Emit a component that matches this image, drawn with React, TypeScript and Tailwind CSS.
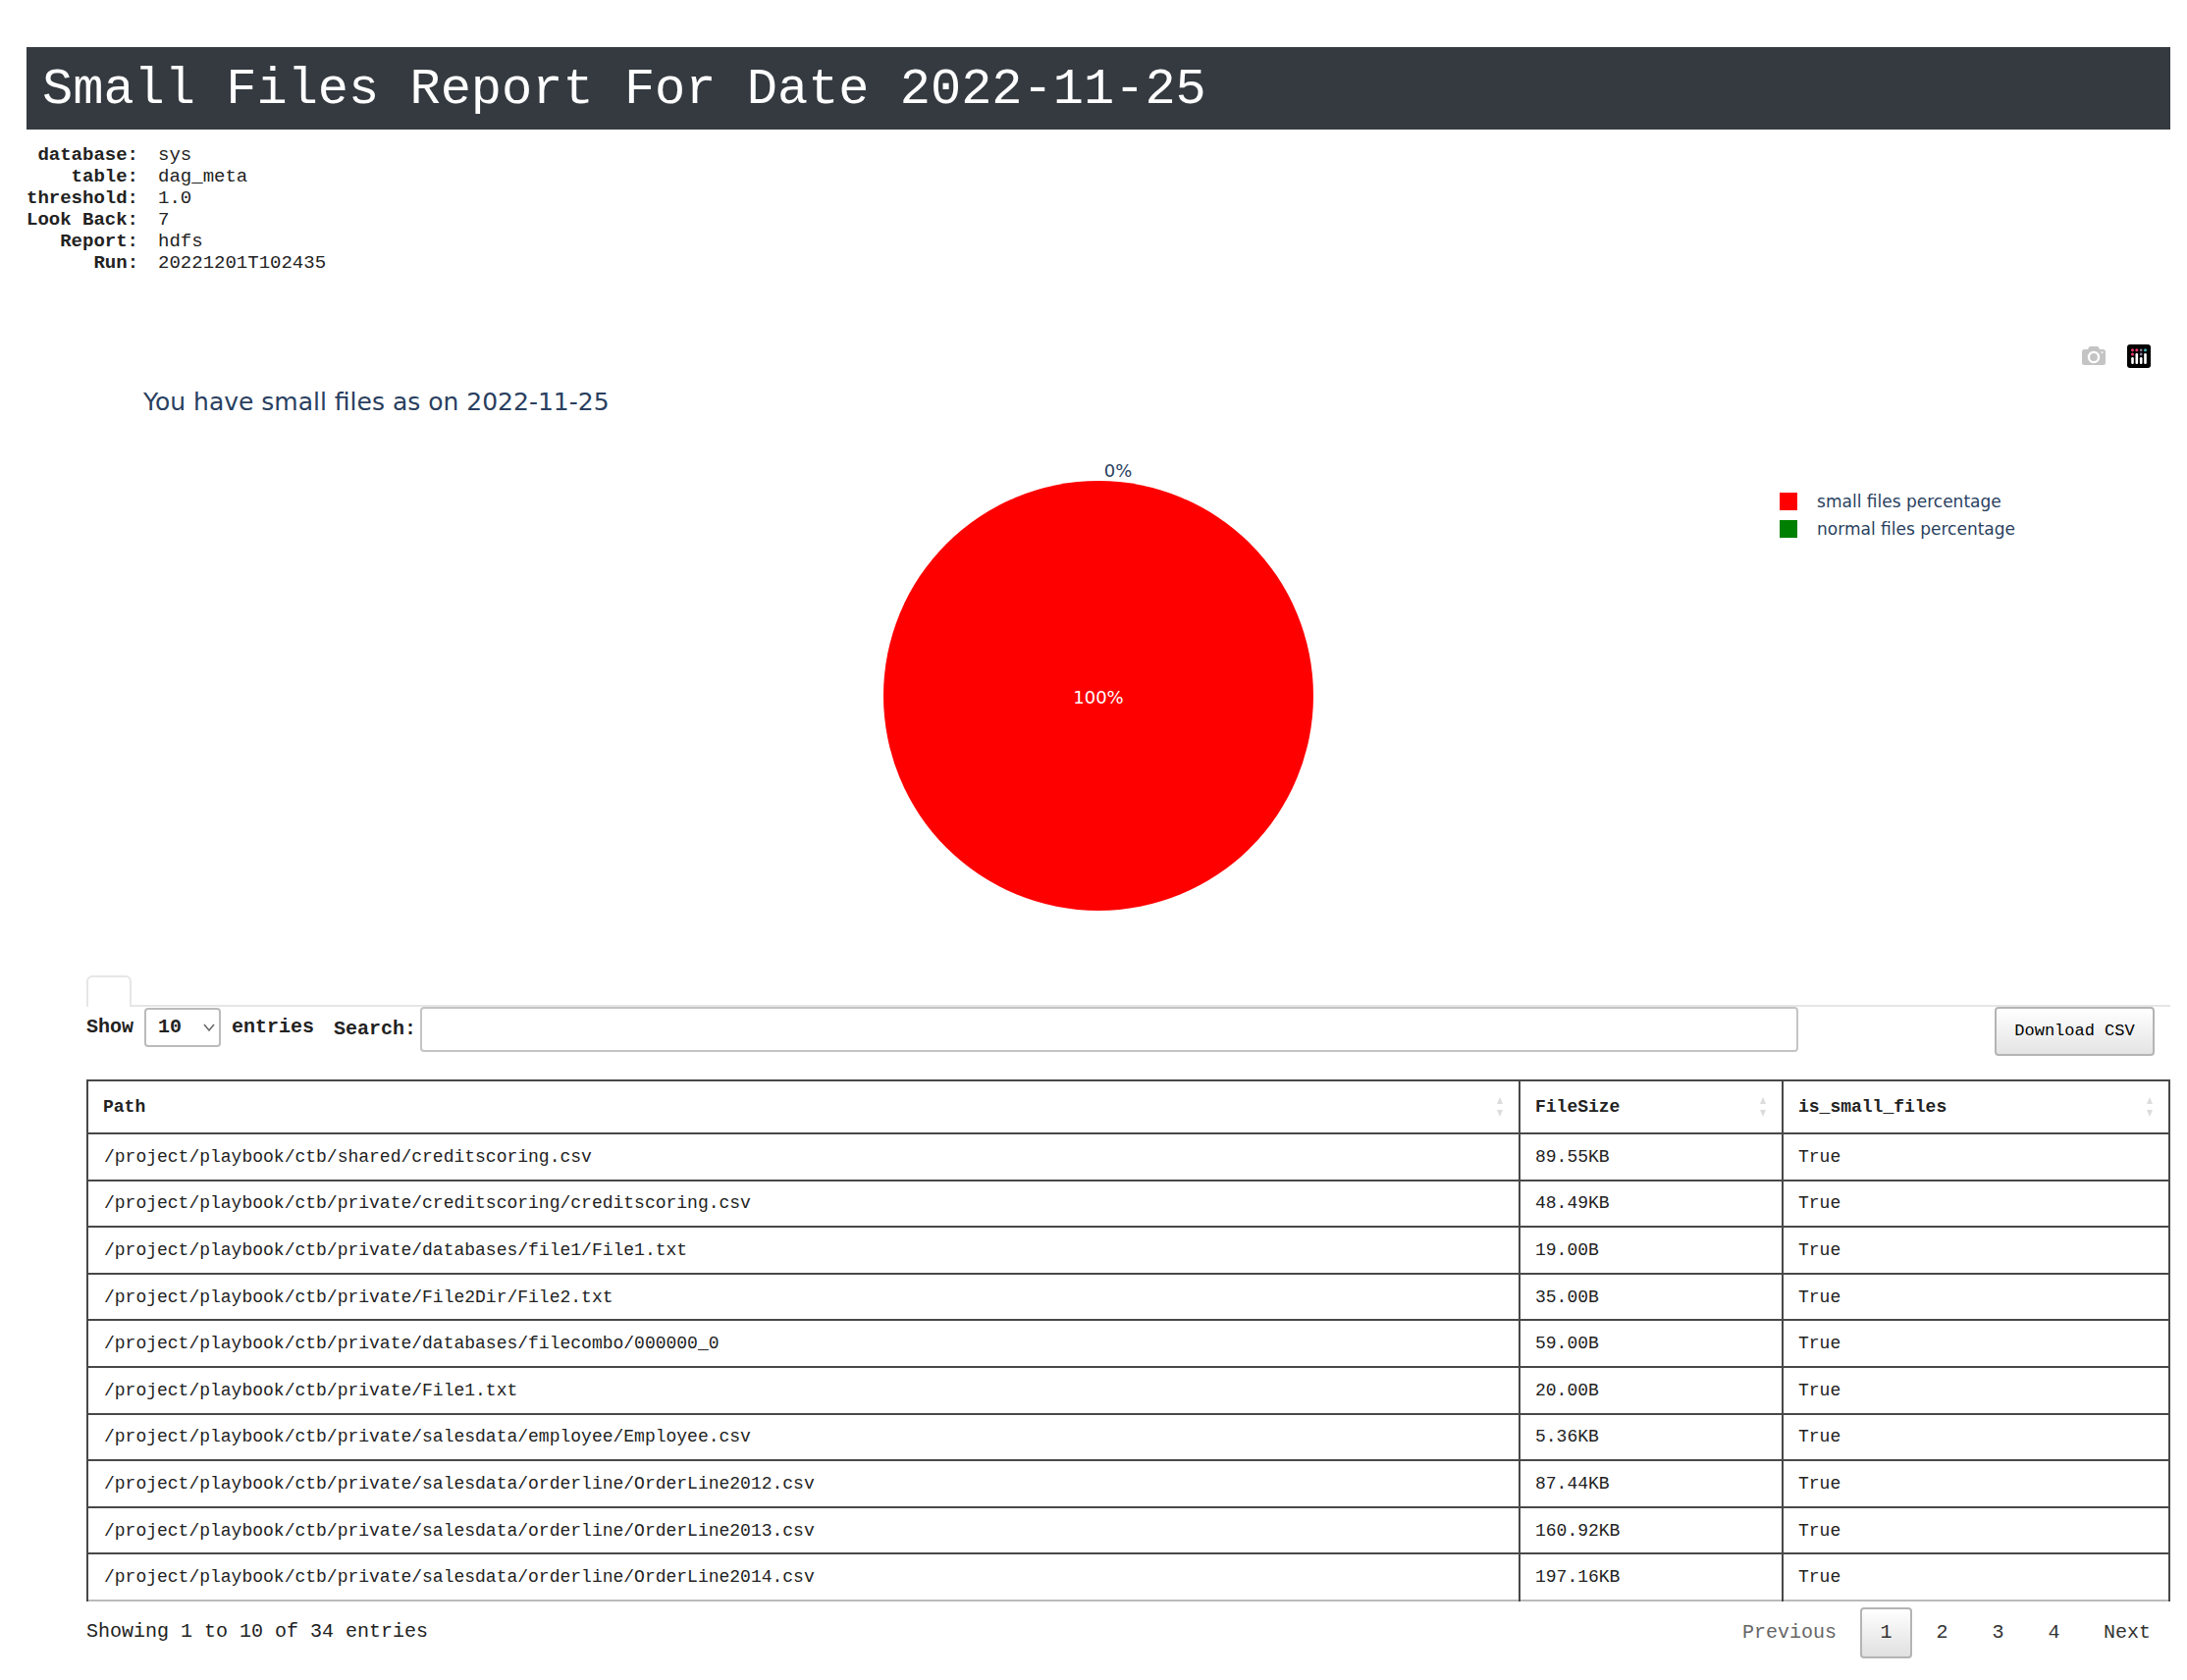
import { useState } from 'react';

const meta = [
  { label: 'database:', value: 'sys' },
  { label: 'table:', value: 'dag_meta' },
  { label: 'threshold:', value: '1.0' },
  { label: 'Look Back:', value: '7' },
  { label: 'Report:', value: 'hdfs' },
  { label: 'Run:', value: '20221201T102435' },
];

const files = [
  { path: '/project/playbook/ctb/shared/creditscoring.csv', size: '89.55KB', small: 'True' },
  { path: '/project/playbook/ctb/private/creditscoring/creditscoring.csv', size: '48.49KB', small: 'True' },
  { path: '/project/playbook/ctb/private/databases/file1/File1.txt', size: '19.00B', small: 'True' },
  { path: '/project/playbook/ctb/private/File2Dir/File2.txt', size: '35.00B', small: 'True' },
  { path: '/project/playbook/ctb/private/databases/filecombo/000000_0', size: '59.00B', small: 'True' },
  { path: '/project/playbook/ctb/private/File1.txt', size: '20.00B', small: 'True' },
  { path: '/project/playbook/ctb/private/salesdata/employee/Employee.csv', size: '5.36KB', small: 'True' },
  { path: '/project/playbook/ctb/private/salesdata/orderline/OrderLine2012.csv', size: '87.44KB', small: 'True' },
  { path: '/project/playbook/ctb/private/salesdata/orderline/OrderLine2013.csv', size: '160.92KB', small: 'True' },
  { path: '/project/playbook/ctb/private/salesdata/orderline/OrderLine2014.csv', size: '197.16KB', small: 'True' },
];

function CameraIcon() {
  return (
    <svg viewBox="0 0 24 20" className="h-5 w-6" fill="#c4c4c4">
      <path
        fillRule="evenodd"
        d="M2.5 3H6l1.2-2.2Q7.6 0 8.5 0h7q.9 0 1.3.8L18 3h3.5Q24 3 24 5.5v11q0 2.500-2.500 2.500h-19Q0 19 0 16.500v-11Q0 3 2.500 3zM12 4.800a6.200 6.200 0 1 0 0 12.400a6.200 6.200 0 0 0 0-12.400zM19.400 5.500v1.300h2.200V5.500z"
      />
      <circle cx="12" cy="11" r="3.9" />
    </svg>
  );
}

function PlotlyIcon() {
  return (
    <svg viewBox="0 0 24 24" className="size-6">
      <rect width="24" height="24" rx="3" fill="#000" />
      <g fill="#ef3b6e">
        <circle cx="5.5" cy="5.8" r="1.5" />
        <circle cx="5.5" cy="10" r="1.5" />
        <circle cx="9.8" cy="5.8" r="1.5" />
      </g>
      <g fill="#8a7a9a">
        <circle cx="14.2" cy="5.8" r="1.4" />
        <circle cx="14.2" cy="10" r="1.4" />
      </g>
      <circle cx="18.5" cy="5.8" r="1.5" fill="#3fb8b8" />
      <g fill="#fff">
        <rect x="4.2" y="13" width="2.6" height="7" rx="1.2" />
        <rect x="8.5" y="9" width="2.6" height="11" rx="1.2" />
        <rect x="12.9" y="13" width="2.6" height="7" rx="1.2" />
        <rect x="17.2" y="9" width="2.6" height="11" rx="1.2" />
      </g>
    </svg>
  );
}

function SortArrows() {
  return (
    <svg viewBox="0 0 6 20" className="h-5 w-[6px] shrink-0" fill="#dcdcdc">
      <path d="M3 0L6 7H0zM3 20L0 13H6z" />
    </svg>
  );
}

function HeaderCell({ title, width }: { title: string; width: string }) {
  return (
    <th className={`${width} border-2 border-[#484848] pl-[15px] pr-4 text-left font-bold`}>
      <div className="flex items-center justify-between">
        {title}
        <SortArrows />
      </div>
    </th>
  );
}

function PieChart() {
  return (
    <section className="pt-[71px] font-['DejaVu_Sans',Verdana,sans-serif] text-[17px] leading-7 text-[#2a3f5f]">
      <div className="flex items-center justify-end gap-[22px] pr-5">
        <button aria-label="Download plot as a png">
          <CameraIcon />
        </button>
        <a href="#plotly" aria-label="Produced with Plotly">
          <PlotlyIcon />
        </a>
      </div>
      <h2 className="pl-[119px] pt-[17px] text-[25px] leading-[36px]">You have small files as on 2022-11-25</h2>
      <div className="grid grid-cols-[1fr_440px_1fr] pt-[42px]">
        <div />
        <svg viewBox="0 0 440 460" className="w-full">
          <circle cx="220" cy="239" r="219" fill="#ff0000" />
          <text x="240" y="16" textAnchor="middle" fontSize="18" fill="#2a3f5f">0%</text>
          <text x="220" y="247" textAnchor="middle" fontSize="18" fill="#ffffff">100%</text>
        </svg>
        <ul className="justify-self-end pr-[158px] pt-[27px]">
          <li className="flex items-center gap-5">
            <span className="size-[18px] bg-[#ff0000]" />
            small files percentage
          </li>
          <li className="flex items-center gap-5">
            <span className="size-[18px] bg-[#008000]" />
            normal files percentage
          </li>
        </ul>
      </div>
    </section>
  );
}

export default function App() {
  const [page, setPage] = useState(1);
  const [search, setSearch] = useState('');

  return (
    <main className="min-h-screen bg-white pb-2 pl-[27px] pr-[17px] pt-12 font-['Liberation_Mono','Courier_New',monospace] text-[#222]">
      <h1 className="bg-[#343a40] px-4 pt-1 text-[52px] leading-[80px] text-white">
        Small Files Report For Date 2022-11-25
      </h1>

      <dl className="grid grid-cols-[max-content_1fr] gap-x-5 pt-[15px] pb-px text-[19px] leading-[22px]">
        {meta.map((item) => (
          <div key={item.label} className="contents">
            <dt className="text-right font-bold">{item.label}</dt>
            <dd>{item.value}</dd>
          </div>
        ))}
      </dl>

      <PieChart />

      <section className="pl-[61px] pt-16">
        {/* Tab strip */}
        <div className="flex">
          <div className="h-8 w-[46px] rounded-t-md border-2 border-b-0 border-[#e6e6e6]" />
          <div className="flex-1 border-b-2 border-[#e6e6e6]" />
        </div>

        {/* Controls */}
        <div className="flex items-start text-xl font-bold">
          <label className="flex items-center gap-[11px] leading-[42px]">
            Show
            <span className="relative">
              <select className="block h-10 w-[78px] appearance-none rounded border-2 border-[#bbb] bg-white pl-3 text-xl font-bold">
                <option>10</option>
                <option>25</option>
                <option>50</option>
                <option>100</option>
              </select>
              <svg viewBox="0 0 12 8" className="pointer-events-none absolute right-[6px] top-4 h-2 w-3" fill="none" stroke="#666" strokeWidth="1.5">
                <path d="M1 1l5 6 5-6" />
              </svg>
            </span>
            entries
          </label>
          <label className="flex flex-1 items-center gap-1 pl-5">
            Search:
            <input
              type="text"
              value={search}
              onChange={(e) => setSearch(e.target.value)}
              className="h-[46px] min-w-0 flex-1 rounded border-2 border-[#c4c4c4] px-2 font-normal"
            />
          </label>
          <button className="ml-[200px] mr-4 h-[50px] w-[163px] rounded-sm border-2 border-[#b4b4b4] bg-gradient-to-b from-white to-[#e4e4e4] text-[17px] font-normal text-black">
            Download CSV
          </button>
        </div>

        {/* File listing */}
        <table className="mt-6 w-full table-fixed border-collapse border-b-2 border-[#484848] text-lg leading-6">
          <thead>
            <tr className="h-[54px]">
              <HeaderCell title="Path" width="w-auto" />
              <HeaderCell title="FileSize" width="w-[268px]" />
              <HeaderCell title="is_small_files" width="w-[394px]" />
            </tr>
          </thead>
          <tbody className="h-[476px]">
            {files.map((file) => (
              <tr key={file.path} className="border-b-2 border-[#484848] last:border-[#bbb]">
                <td className="border-x-2 border-[#484848] px-4">{file.path}</td>
                <td className="border-x-2 border-[#484848] px-[15px]">{file.size}</td>
                <td className="border-x-2 border-[#484848] px-[15px]">{file.small}</td>
              </tr>
            ))}
          </tbody>
        </table>

        <div className="flex items-start justify-between pt-[6px] text-xl leading-[50px]">
          <p>Showing 1 to 10 of 34 entries</p>
          <nav className="flex items-center gap-1 pr-1 text-[#333]">
            <button className="h-[52px] px-5 text-[#666]">Previous</button>
            {[1, 2, 3, 4].map((n) => (
              <button
                key={n}
                onClick={() => setPage(n)}
                className={
                  n === page
                    ? 'h-[52px] w-[53px] rounded-sm border-2 border-[#b4b4b4] bg-gradient-to-b from-white to-[#e0e0e0] leading-[46px]'
                    : 'h-[52px] w-[53px]'
                }
              >
                {n}
              </button>
            ))}
            <button className="h-[52px] pl-5 pr-4">Next</button>
          </nav>
        </div>
      </section>
    </main>
  );
}
